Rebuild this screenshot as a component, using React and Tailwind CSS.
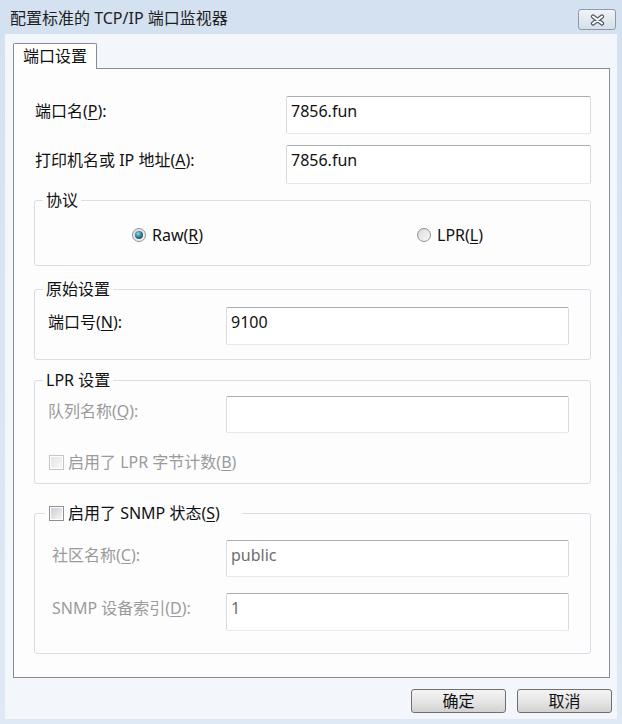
import React from 'react';

// Win7-style "配置标准的 TCP/IP 端口监视器" dialog

const Acc = ({ children }) => <u className="underline underline-offset-[2px]">{children}</u>;

const TextBox = ({ value, width = 'w-[343px]', height = 'h-[38px]', muted }) => (
    <div
        className={`${width} ${height} shrink-0 rounded-[2px] border border-[#d6dbe3] border-t-[#abadb3] border-b-[#e3e9ef] bg-white pl-[4px] pt-[4px] leading-[20px] ${muted ? 'text-[#6d6d6d]' : 'text-[#111]'}`}
    >
        {value}
    </div>
);

const Checkbox = ({ disabled }) => (
    <span
        className={`inline-flex h-[15px] w-[15px] shrink-0 items-center justify-center border bg-white ${disabled ? 'border-[#c4c6c8]' : 'border-[#8e8f8f]'}`}
    >
        <span
            className={`h-[11px] w-[11px] bg-gradient-to-br ${disabled ? 'from-[#e4e4e4] to-[#f8f8f8]' : 'from-[#cbcfd5] to-[#f4f4f4]'}`}
        />
    </span>
);

const Radio = ({ checked }) => (
    <span className="inline-flex h-[14px] w-[14px] shrink-0 items-center justify-center rounded-full border border-[#8f9093] bg-gradient-to-br from-[#d9d9d9] to-[#fbfbfb]">
        {checked && (
            <span className="h-[8px] w-[8px] rounded-full bg-[radial-gradient(circle_at_40%_35%,#8fd8ee,#1d6f8c_55%,#0b3a4f)]" />
        )}
    </span>
);

const Group = ({ legend, legendClass = 'ml-[8px] px-[3px]', className = '', children }) => (
    <fieldset className={`rounded-[3px] border border-[#d5dfe5] px-0 ${className}`}>
        <legend className={`${legendClass} leading-[20px]`}>{legend}</legend>
        {children}
    </fieldset>
);

const CloseGlyph = () => (
    <svg width="17" height="12" viewBox="0 0 17 12">
        <path d="M4 2.5 L13 9.5 M13 2.5 L4 9.5" stroke="#4d5866" strokeWidth="4.2" strokeLinecap="round" fill="none" />
        <path d="M4 2.5 L13 9.5 M13 2.5 L4 9.5" stroke="#ffffff" strokeWidth="2" strokeLinecap="round" fill="none" />
    </svg>
);

const App = () => {
    return (
        <div className="flex h-[724px] w-[622px] flex-col overflow-hidden bg-gradient-to-b from-[#d3e1f1] to-[#dfe9f6] font-['Noto_Sans','Noto_Sans_CJK_SC',sans-serif] text-[16px] text-[#111]">
            {/* Title bar */}
            <div className="flex h-[34px] shrink-0 items-start justify-between">
                <div className="pl-[10px] pt-[8px] leading-[20px] text-[#1e1e1e]">配置标准的 TCP/IP 端口监视器</div>
                <button className="mr-[6px] mt-[9px] flex h-[21px] w-[38px] items-center justify-center rounded-[3px] border border-[#8d9aab] bg-gradient-to-b from-[#f1f4f8] to-[#d6dee8]">
                    <CloseGlyph />
                </button>
            </div>

            {/* Client area */}
            <div className="mx-[5px] mb-[5px] flex flex-1 flex-col bg-[#f3f6fa] pl-[8px] pr-[7px] pt-[9px]">
                {/* Tab strip */}
                <div className="flex">
                    <div className="relative z-10 -mb-px flex h-[26px] w-[84px] items-center justify-center rounded-t-[2px] border border-b-0 border-[#898c95] bg-white pb-[1px] leading-[20px]">
                        端口设置
                    </div>
                </div>

                {/* Tab panel */}
                <div className="flex flex-col border border-[#898c95] bg-[#fdfdfe] pb-[23px] pl-[20px] pr-[18px] pt-[27px]">
                    <div className="flex items-start justify-between pl-px">
                        <span className="pt-[5px] leading-[20px]">端口名(<Acc>P</Acc>):</span>
                        <TextBox value="7856.fun" width="w-[305px]" />
                    </div>
                    <div className="mt-[11px] flex items-start justify-between pl-px">
                        <span className="pt-[5px] leading-[20px]">打印机名或 IP 地址(<Acc>A</Acc>):</span>
                        <TextBox value="7856.fun" width="w-[305px]" height="h-[39px]" />
                    </div>

                    <Group legend="协议" className="mt-[6px]">
                        <div className="flex pb-[20px] pl-[97px] pt-[15px] leading-[20px]">
                            <div className="flex w-[285px] items-center gap-[6px]">
                                <Radio checked />
                                <span>Raw(<Acc>R</Acc>)</span>
                            </div>
                            <div className="flex items-center gap-[6px]">
                                <Radio />
                                <span>LPR(<Acc>L</Acc>)</span>
                            </div>
                        </div>
                    </Group>

                    <Group legend="原始设置" className="mt-[13px]">
                        <div className="flex items-start justify-between pb-[14px] pl-[13px] pr-[21px] pt-[8px]">
                            <span className="pt-[5px] leading-[20px]">端口号(<Acc>N</Acc>):</span>
                            <TextBox value="9100" />
                        </div>
                    </Group>

                    <Group legend="LPR 设置" className="mt-[10px]">
                        <div className="flex flex-col pb-[11px] pl-[13px] pr-[21px] pt-[6px] text-[#9a9a9a]">
                            <div className="flex items-start justify-between">
                                <span className="pt-[5px] leading-[20px]">队列名称(<Acc>Q</Acc>):</span>
                                <TextBox value="" height="h-[37px]" />
                            </div>
                            <div className="mt-[19px] flex items-center gap-[4px] pl-px leading-[20px]">
                                <Checkbox disabled />
                                <span>启用了 LPR 字节计数(<Acc>B</Acc>)</span>
                            </div>
                        </div>
                    </Group>

                    <Group
                        className="mt-[19px]"
                        legendClass="ml-[10px] pl-[4px] pr-[22px]"
                        legend={
                            <span className="flex items-center gap-[4px]">
                                <Checkbox />
                                <span>启用了 SNMP 状态(<Acc>S</Acc>)</span>
                            </span>
                        }
                    >
                        <div className="flex flex-col pb-[22px] pl-[17px] pr-[21px] pt-[17px] text-[#9a9a9a]">
                            <div className="flex items-start justify-between">
                                <span className="pt-[5px] leading-[20px]">社区名称(<Acc>C</Acc>):</span>
                                <TextBox value="public" height="h-[37px]" muted />
                            </div>
                            <div className="mt-[16px] flex items-start justify-between">
                                <span className="pt-[5px] leading-[20px]">SNMP 设备索引(<Acc>D</Acc>):</span>
                                <TextBox value="1" muted />
                            </div>
                        </div>
                    </Group>
                </div>

                {/* Buttons */}
                <div className="-mr-[2px] mt-[11px] flex justify-end gap-[11px]">
                    <button className="h-[24px] w-[95px] rounded-[3px] border border-[#707070] bg-gradient-to-b from-[#f4f4f4] via-[#e6e6e6] to-[#d2d2d2] leading-[20px]">
                        确定
                    </button>
                    <button className="h-[24px] w-[95px] rounded-[3px] border border-[#707070] bg-gradient-to-b from-[#f4f4f4] via-[#e6e6e6] to-[#d2d2d2] leading-[20px]">
                        取消
                    </button>
                </div>
            </div>
        </div>
    );
};

export default App;
